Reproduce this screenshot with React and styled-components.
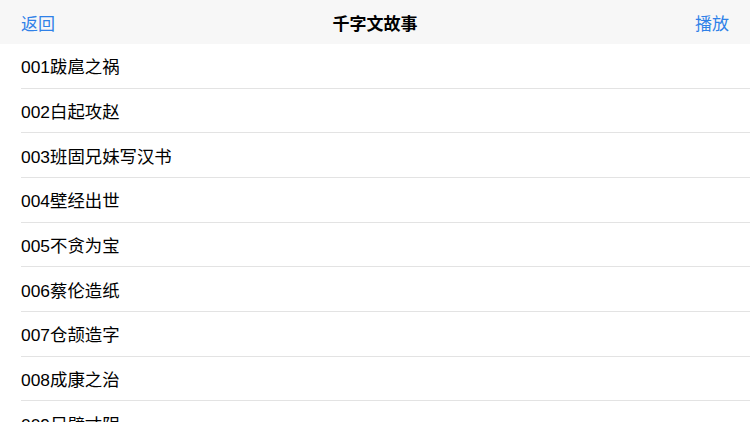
import React from "react";
import styled, { createGlobalStyle } from "styled-components";

const stories = [
  "001跋扈之祸",
  "002白起攻赵",
  "003班固兄妹写汉书",
  "004壁经出世",
  "005不贪为宝",
  "006蔡伦造纸",
  "007仓颉造字",
  "008成康之治",
  "009尺璧寸阴",
  "010崇尚节俭",
];

const GlobalStyle = createGlobalStyle`
  html, body {
    margin: 0;
    padding: 0;
    background: #ffffff;
    font-family: "Liberation Sans", "Noto Sans CJK SC", sans-serif;
    overflow: hidden;
  }
`;

const Page = styled.div`
  width: 750px;
  height: 422px;
  overflow: hidden;
  background: #ffffff;
`;

const NavBar = styled.div`
  height: 44px;
  background: #f7f7f7;
  display: grid;
  grid-template-columns: 1fr auto 1fr;
  align-items: center;
  padding: 0 21px;
`;

const NavButton = styled.div`
  font-size: 17px;
  color: #2f81e8;
  justify-self: ${(p) => (p.$right ? "end" : "start")};
  cursor: pointer;
`;

const Title = styled.div`
  font-size: 17px;
  font-weight: 600;
  color: #000;
`;

const List = styled.div`
  display: flex;
  flex-direction: column;
  padding-left: 21px;
`;

const Row = styled.div`
  height: 44.67px;
  box-sizing: border-box;
  display: flex;
  align-items: center;
  font-size: 17.4px;
  color: #000;
  border-bottom: 1px solid #e3e3e3;
`;

export default function App() {
  return (
    <Page>
      <GlobalStyle />
      <NavBar>
        <NavButton>返回</NavButton>
        <Title>千字文故事</Title>
        <NavButton $right>播放</NavButton>
      </NavBar>
      <List>
        {stories.map((s) => (
          <Row key={s}>{s}</Row>
        ))}
      </List>
    </Page>
  );
}
